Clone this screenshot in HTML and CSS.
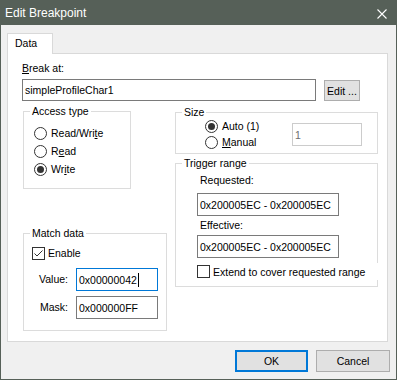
FILE: index.html
```html
<!DOCTYPE html>
<html lang="en">
<head>
  <meta charset="UTF-8" />
  <title>Edit Breakpoint</title>
  <link rel="stylesheet" href="styles.css">
</head>
<body>

  <div class="window">
    <div class="titlebar">
      <span class="title">Edit Breakpoint</span>
      <svg class="close" width="10" height="10" viewBox="0 0 10 10">
        <path d="M0.5 0.5L9.5 9.5M9.5 0.5L0.5 9.5" stroke="#fff" stroke-width="1.1" fill="none"/>
      </svg>
    </div>

    <div class="client">
      <div class="tabs">
        <div class="tab">Data</div>
      </div>

      <div class="panel">
        <div class="label"><u>B</u>reak at:</div>
        <div class="break-row">
          <div class="edit break-edit">simpleProfileChar1</div>
          <div class="button edit-btn">Edit ...</div>
        </div>

        <div class="columns">
          <div class="col-left">
            <div class="group access">
              <div class="group-title">Access type</div>
              <div class="access-body">
                <div class="radio">
                  <svg class="radio-box" width="13" height="13" viewBox="0 0 13 13"><circle cx="6.5" cy="6.5" r="6" fill="#fff" stroke="#333"/></svg>
                  <span>Read/Wri<u>t</u>e</span>
                </div>
                <div class="radio">
                  <svg class="radio-box" width="13" height="13" viewBox="0 0 13 13"><circle cx="6.5" cy="6.5" r="6" fill="#fff" stroke="#333"/></svg>
                  <span>R<u>e</u>ad</span>
                </div>
                <div class="radio">
                  <svg class="radio-box" width="13" height="13" viewBox="0 0 13 13"><circle cx="6.5" cy="6.5" r="6" fill="#fff" stroke="#333"/><circle cx="6.5" cy="6.5" r="3.5" fill="#333"/></svg>
                  <span>Wr<u>i</u>te</span>
                </div>
              </div>
            </div>

            <div class="group match">
              <div class="group-title">Match data</div>
              <div class="match-body">
                <div class="check">
                  <svg class="check-box" width="13" height="13" viewBox="0 0 13 13">
                    <rect x="0.5" y="0.5" width="12" height="12" fill="#fff" stroke="#333"/>
                    <path d="M2.5 6.5L5 9L10.5 3.5" stroke="#333" stroke-width="1" fill="none"/>
                  </svg>
                  <span>Enable</span>
                </div>
                <div class="value-grid">
                  <span class="field-label">Value:</span>
                  <div class="edit hex-edit focused">0x00000042<span class="caret"></span></div>
                  <span class="field-label">Mask:</span>
                  <div class="edit hex-edit">0x000000FF</div>
                </div>
              </div>
            </div>
          </div>

          <div class="col-right">
            <div class="group size">
              <div class="group-title">Size</div>
              <div class="size-body">
                <div class="size-radios">
                  <div class="radio small">
                    <svg class="radio-box" width="13" height="13" viewBox="0 0 13 13"><circle cx="6.5" cy="6.5" r="6" fill="#fff" stroke="#333"/><circle cx="6.5" cy="6.5" r="3.5" fill="#333"/></svg>
                    <span>Auto (1)</span>
                  </div>
                  <div class="radio small">
                    <svg class="radio-box" width="13" height="13" viewBox="0 0 13 13"><circle cx="6.5" cy="6.5" r="6" fill="#fff" stroke="#333"/></svg>
                    <span><u>M</u>anual</span>
                  </div>
                </div>
                <div class="edit size-edit">1</div>
              </div>
            </div>

            <div class="group trigger">
              <div class="group-title">Trigger range</div>
              <div class="trigger-body">
                <div class="sub-label first">Requested:</div>
                <div class="edit range-edit">0x200005EC - 0x200005EC</div>
                <div class="sub-label">Effective:</div>
                <div class="edit range-edit">0x200005EC - 0x200005EC</div>
                <div class="check extend">
                  <svg class="check-box" width="13" height="13" viewBox="0 0 13 13">
                    <rect x="0.5" y="0.5" width="12" height="12" fill="#fff" stroke="#333"/>
                  </svg>
                  <span>Extend to cover requested range</span>
                </div>
              </div>
            </div>
          </div>
        </div>
      </div>

      <div class="buttons">
        <div class="button ok">OK</div>
        <div class="button cancel">Cancel</div>
      </div>
    </div>
  </div>

</body>
</html>
```

FILE: styles.css
```css
body {
  margin: 0;
  font-family: "Liberation Sans", Arial, sans-serif;
  font-size: 10.5px;
  color: #000;
  background-color: #f0f0f0;
}

u {
  text-decoration-thickness: 1px;
  text-underline-offset: 1px;
}

.window {
  width: 397px;
  height: 380px;
  box-sizing: border-box;
  border: 1px solid #566058;
  background-color: #f0f0f0;
}

.titlebar {
  height: 24px;
  background-color: #566058;
  color: #fff;
  display: flex;
  align-items: center;
  justify-content: space-between;
  padding: 0 9px 0 4px;
}

.title {
  font-size: 12px;
}

.close {
  display: block;
  margin-top: 1px;
}

.client {
  padding: 8px 0 0 6px;
}

.tabs {
  height: 20px;
  display: flex;
}

.tab {
  position: relative;
  width: 46px;
  height: 21px;
  box-sizing: border-box;
  padding: 3px 0 0 7px;
  line-height: 13px;
  background-color: #fff;
  border: 1px solid #d9d9d9;
  border-bottom: none;
}

.panel {
  width: 381px;
  height: 289px;
  box-sizing: border-box;
  background-color: #fff;
  border: 1px solid #d9d9d9;
  padding-top: 8px;
}

.label {
  line-height: 13px;
  padding-left: 14px;
}

.break-row {
  display: flex;
  align-items: flex-start;
  gap: 8px;
  margin: 4px 0 0 14px;
}

.edit {
  box-sizing: border-box;
  border: 1px solid #7a7a7a;
  background-color: #fff;
  padding-left: 2px;
  display: flex;
  align-items: center;
  white-space: nowrap;
}

.break-edit {
  width: 294px;
  height: 22px;
}

.button {
  box-sizing: border-box;
  background-color: #e1e1e1;
  border: 1px solid #adadad;
  display: flex;
  align-items: center;
  justify-content: center;
}

.edit-btn {
  width: 36px;
  height: 21px;
  margin-top: 1px;
}

.columns {
  display: flex;
  gap: 8px;
  margin-left: 15px;
}

.col-left {
  width: 144px;
}

.col-right {
  width: 203px;
}

.group {
  box-sizing: border-box;
  border: 1px solid #dcdcdc;
}

.group-title {
  width: fit-content;
  margin: -7px 0 -6px 6px;
  padding: 0 2px;
  line-height: 13px;
  background-color: #fff;
}

.access {
  width: 108px;
  height: 78px;
  margin-top: 10px;
}

.access-body {
  padding: 12px 0 0 10px;
}

.radio,
.check {
  display: flex;
  align-items: center;
  height: 18px;
}

.radio.small {
  height: 16px;
}

.radio-box,
.check-box {
  display: block;
  flex-shrink: 0;
  margin-right: 4px;
}

.check-box {
  margin-right: 3px;
}

.match {
  width: 144px;
  height: 98px;
  margin-top: 44px;
}

.match-body {
  padding-top: 11px;
}

.match .check {
  height: 16px;
  margin-left: 8px;
}

.value-grid {
  display: grid;
  grid-template-columns: 44px 82px;
  grid-auto-rows: 23px;
  column-gap: 8px;
  row-gap: 5px;
  margin-top: 7px;
}

.field-label {
  text-align: right;
  line-height: 23px;
}

.hex-edit {
  height: 23px;
}

.focused {
  border-color: #0078d7;
}

.caret {
  display: inline-block;
  width: 1px;
  height: 14px;
  background-color: #000;
  margin-left: 1px;
}

.size {
  height: 42px;
  margin-top: 11px;
}

.size-body {
  display: flex;
  align-items: flex-start;
  padding: 5px 0 0 29px;
}

.size-radios {
  width: 87px;
}

.size-edit {
  width: 70px;
  height: 23px;
  margin-top: 5px;
  border-color: #cccccc;
  color: #6d6d6d;
}

.trigger {
  height: 124px;
  margin-top: 9px;
}

.trigger-body {
  padding-left: 21px;
}

.sub-label {
  line-height: 13px;
  padding-left: 3px;
  margin: 3px 0;
}

.sub-label.first {
  margin: 10px 0 6px 0;
}

.range-edit {
  width: 142px;
  height: 23px;
}

.check.extend {
  height: 17px;
  margin: 5px -1px 0 0;
  background-color: #fff;
}

.buttons {
  display: flex;
  justify-content: flex-end;
  gap: 8px;
  margin-top: 8px;
  padding-right: 6px;
}

.buttons .button {
  height: 22px;
}

.ok {
  width: 73px;
  border: 2px solid #0078d7;
}

.cancel {
  width: 74px;
}
```
